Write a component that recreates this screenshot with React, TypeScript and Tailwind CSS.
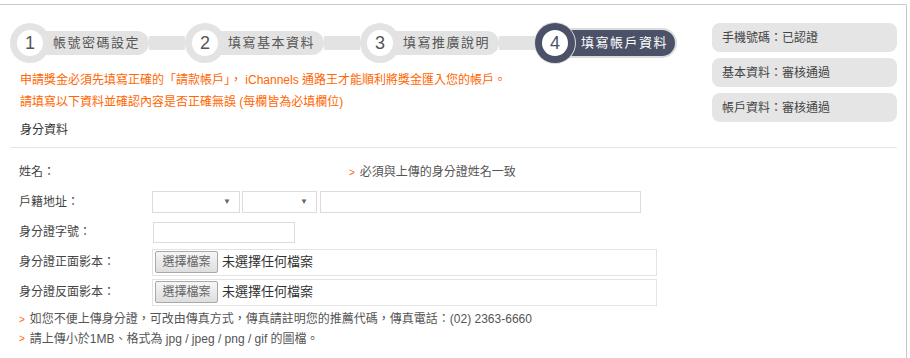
import React from "react";

const steps = [
  { no: 1, label: "帳號密碼設定" },
  { no: 2, label: "填寫基本資料" },
  { no: 3, label: "填寫推廣說明" },
  { no: 4, label: "填寫帳戶資料", active: true },
];

const statuses = ["手機號碼：已認證", "基本資料：審核通過", "帳戶資料：審核通過"];

function Step({ no, label, active }: { no: number; label: string; active?: boolean }) {
  return (
    <div className="flex items-center">
      <div
        className={
          active
            ? "relative z-10 flex h-[40px] w-[40px] items-center justify-center rounded-full bg-[#4b5167] shadow-[0_0_0_1px_#dcdcdc]"
            : "relative z-10 flex h-[40px] w-[40px] items-center justify-center rounded-full bg-[#e3e3e3]"
        }
      >
        <div
          className={
            active
              ? "flex h-[26px] w-[26px] items-center justify-center rounded-full bg-white text-[18px] leading-none text-[#4b5167]"
              : "flex h-[26px] w-[26px] items-center justify-center rounded-full bg-white text-[18px] leading-none text-[#555]"
          }
        >
          {no}
        </div>
      </div>
      <div
        className={
          active
            ? "-ml-[20px] flex h-[26px] items-center rounded-r-full bg-[#4b5167] pl-[26px] pr-[7px] text-[13px] tracking-[1.5px] text-white shadow-[0_0_0_2px_#dcdcdc]"
            : "-ml-[20px] flex h-[24px] items-center rounded-r-full bg-[#e3e3e3] pl-[23px] pr-[9px] text-[13px] tracking-[1.5px] text-[#555]"
        }
      >
        {label}
      </div>
    </div>
  );
}

function Select({ w }: { w: string }) {
  return (
    <div className={`flex h-[22px] items-center justify-end border border-[#dcdcdc] bg-white pr-[8px] ${w}`}>
      <span className="text-[8px] text-[#666]">▼</span>
    </div>
  );
}

function FileBox() {
  return (
    <div className="flex h-[27px] w-[505px] items-center border border-[#e3e3e3] bg-white pl-[2px]">
      <span className="flex h-[22px] w-[63px] items-center justify-center rounded-[2px] border border-[#a9a9a9] bg-gradient-to-b from-[#f6f6f6] to-[#dedede] text-[12px] text-[#666]">
        選擇檔案
      </span>
      <span className="ml-[4px] text-[13px] text-[#333]">未選擇任何檔案</span>
    </div>
  );
}

function Row({ label, children }: { label: string; children?: React.ReactNode }) {
  return (
    <div className="flex h-[30px] items-center">
      <div className="w-[142px] pl-[9px] text-[12px] text-[#444]">{label}</div>
      {children}
    </div>
  );
}

export default function App() {
  return (
    <div className="h-[358px] w-[910px] overflow-hidden bg-white font-['Liberation_Sans','Noto_Sans_CJK_TC',sans-serif]">
      <div className="mt-[4px] h-[354px] w-[907px] rounded-tr-[2px] border-r border-t border-[#c8c8c8] pl-[10px]">
        <div className="flex">
          <div className="flex-1">
            <div className="mt-[18px] flex items-center">
              <Step {...steps[0]} />
              <div className="h-[14px] w-[36px] bg-[#e3e3e3]" />
              <Step {...steps[1]} />
              <div className="h-[14px] w-[36px] bg-[#e3e3e3]" />
              <Step {...steps[2]} />
              <div className="h-[14px] w-[36px] bg-[#e3e3e3]" />
              <Step {...steps[3]} />
            </div>
            <div className="mt-[6px] pl-[10px] text-[12px] leading-[22px] text-[#ff6600]">
              <p>申請獎金必須先填寫正確的「請款帳戶」， iChannels 通路王才能順利將獎金匯入您的帳戶。</p>
              <p>請填寫以下資料並確認內容是否正確無誤 (每欄皆為必填欄位)</p>
            </div>
            <p className="mt-[6px] pl-[10px] text-[12px] leading-[22px] text-[#333]">身分資料</p>
          </div>
          <div className="mr-[9px] mt-[18px] flex w-[185px] flex-col gap-[6px]">
            {statuses.map((s) => (
              <div key={s} className="flex h-[29px] items-center rounded-[8px] bg-[#e5e5e5] pl-[10px] text-[12px] text-[#444]">
                {s}
              </div>
            ))}
          </div>
        </div>

        <div className="mr-[9px] mt-[6px] h-px bg-[#e6e6e6]" />

        <div className="mt-[9px]">
          <Row label="姓名：">
            <span className="ml-[197px] text-[10px] text-[#ff6600]">&gt;</span>
            <span className="ml-[5px] text-[12px] text-[#555]">必須與上傳的身分證姓名一致</span>
          </Row>
          <Row label="戶籍地址：">
            <div className="flex gap-[2px]">
              <Select w="w-[88px]" />
              <Select w="w-[75px]" />
              <div className="ml-[1px] h-[22px] w-[321px] border border-[#dcdcdc] bg-white" />
            </div>
          </Row>
          <Row label="身分證字號：">
            <div className="ml-[1px] h-[21px] w-[142px] border border-[#dcdcdc] bg-white" />
          </Row>
          <Row label="身分證正面影本：">
            <FileBox />
          </Row>
          <Row label="身分證反面影本：">
            <FileBox />
          </Row>
          <div className="mt-[2px] flex h-[20px] items-center pl-[9px] text-[12px] text-[#555]">
            <span className="text-[10px] text-[#ff6600]">&gt;</span>
            <span className="ml-[5px]">如您不便上傳身分證，可改由傳真方式，傳真請註明您的推薦代碼，傳真電話：(02) 2363-6660</span>
          </div>
          <div className="flex h-[19px] items-center pl-[9px] text-[12px] text-[#555]">
            <span className="text-[10px] text-[#ff6600]">&gt;</span>
            <span className="ml-[5px]">請上傳小於1MB、格式為 jpg / jpeg / png / gif 的圖檔。</span>
          </div>
        </div>
      </div>
    </div>
  );
}
